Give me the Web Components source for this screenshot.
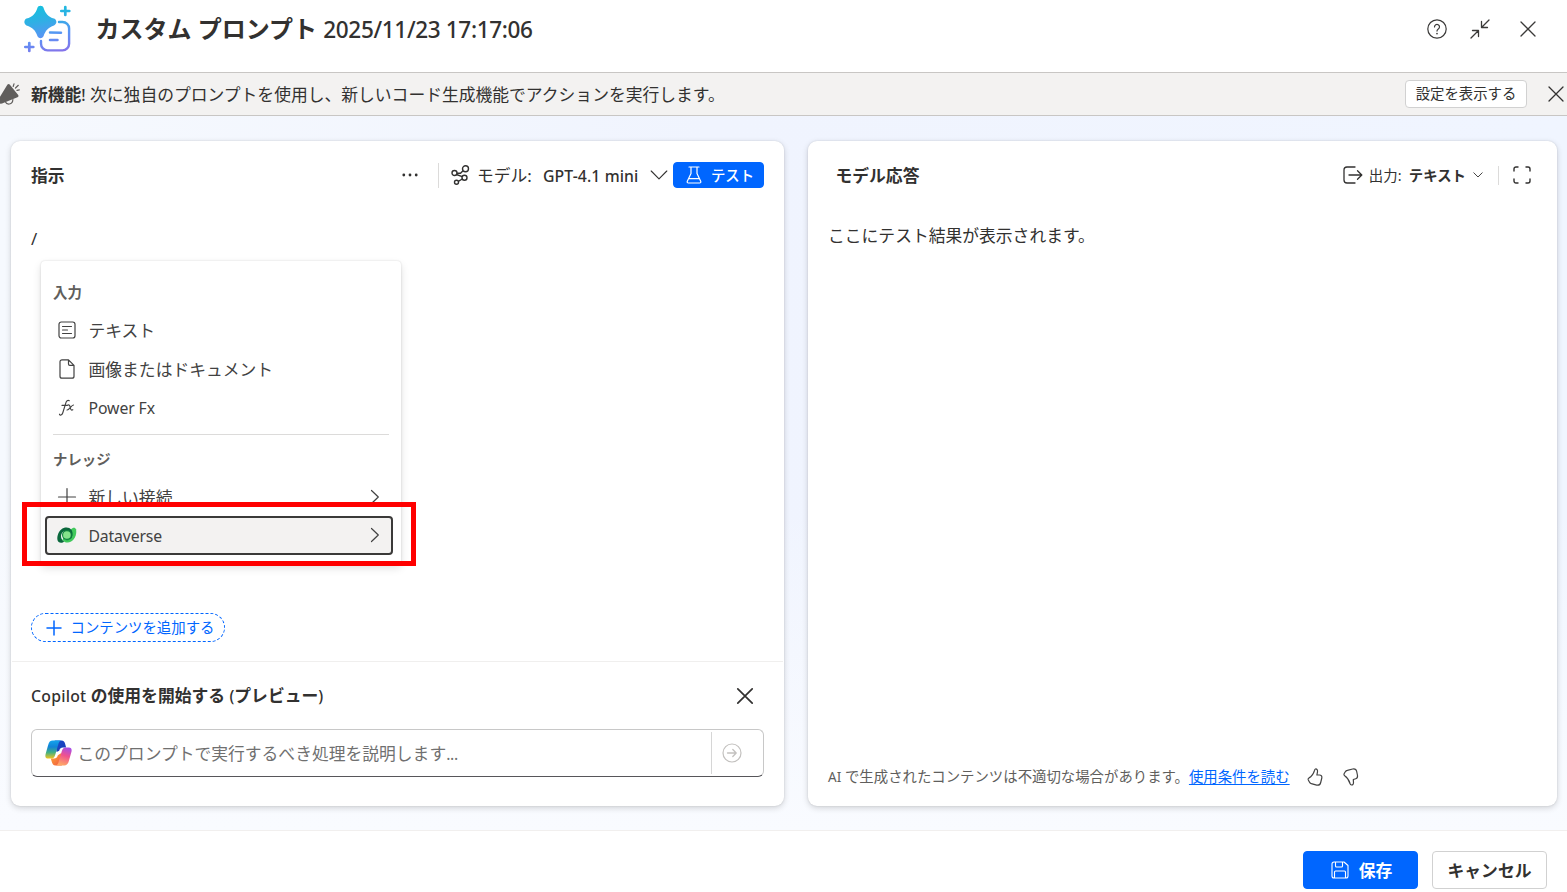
<!DOCTYPE html>
<html lang="ja">
<head>
<meta charset="utf-8">
<title>カスタム プロンプト</title>
<style>
    html, body { height: 100%; }
    body {
        margin: 0;
        overflow: hidden;
        color: #323130;
        font: 16.8px/24px "Noto Sans", "Noto Sans CJK JP", sans-serif;
    }
</style>
</head>
<body>
<prompt-app></prompt-app>

<script>
"use strict";
const line = (d, w = 1.2) => `<path d="${d}" fill="none" stroke="currentColor" stroke-width="${w}" stroke-linecap="round" stroke-linejoin="round"/>`;

// [width, height, markup]
const ICONS = {
    logo: [48, 48, `
        <defs><linearGradient id="g" gradientUnits="userSpaceOnUse" x1="20" y1="0" x2="30" y2="48">
            <stop offset="0" stop-color="#16c0de"/><stop offset=".3" stop-color="#2fb0e4"/><stop offset=".65" stop-color="#5b93f5"/><stop offset="1" stop-color="#8573ea"/>
        </linearGradient></defs>
        <path fill="url(#g)" d="M13.300 3.200C14.200 0 18.800 0 19.700 3.200C21.200 8.300 24.500 11.800 30 13.600C33.200 14.900 33.200 19.100 30 20.400C24.500 22.200 21.200 25.700 19.700 30.800C18.800 34 14.200 34 13.300 30.800C11.800 25.700 8.500 22.200 2.500 20.400C-.3 19.100-.3 14.900 2.500 13.600C8.500 11.800 11.800 8.300 13.300 3.200Z"/>
        <g fill="none" stroke="url(#g)" stroke-width="2.400" stroke-linecap="round">
            <path d="M35 17H38.500A6.600 6.600 0 0 1 45.100 23.600V38.800A6.600 6.600 0 0 1 38.500 45.400H23.600A6.600 6.600 0 0 1 17 38.800V36"/>
            <path d="M26 27.600L37 27.700M26 34.900L33.500 35" stroke-width="2.500"/>
            <path d="M41.300 2V10M37.300 6L45.300 6.010M5.300 38V46M1.300 42L9.300 42.010" stroke-width="2.700"/>
        </g>`],
    help: [20, 20, `<circle cx="10" cy="10" r="9.200" fill="none" stroke="currentColor" stroke-width="1.200"/>` +
        line('M7.500 7.900A2.500 2.500 0 1 1 11.300 10C10.300 10.700 10 11.100 10 12.100') + '<circle cx="10" cy="14.600" r=".85" fill="currentColor"/>'],
    shrink: [20, 20, line('M19 1L11.500 8.500M11.500 2.500V8.500H17.500M1 19L8.500 11.500M2.500 11.500H8.500V17.500', 1.300)],
    close: [16, 16, line('M1 1L15 15M15 1L1 15', 1.300)],
    closeBold: [16, 16, line('M.8 .8L15.200 15.200M15.200 .8L.8 15.200', 1.700)],
    megaphone: [20, 22, `
        <path fill="#605e5c" d="M7.500 1.600C8.200 .7 9.300 .8 9.900 1.700L18.200 12C18.800 13 18.400 13.800 17.500 14.200L2 20.600C1 21-.6 20.500-.6 19.500L-2 17Z"/>
        <path fill="none" stroke="#605e5c" stroke-width="1.200" stroke-linecap="round" d="M5.500 19C6.500 21.600 12.500 22.500 12.900 16.500M13.200 3.500L14 .800M15.500 5L18.300 2.300M17 7.300L19.300 6.900"/>`],
    more: [18, 4, '<g fill="currentColor"><circle cx="2.800" cy="2" r="1.400"/><circle cx="9" cy="2" r="1.400"/><circle cx="15.200" cy="2" r="1.400"/></g>'],
    model: [19, 20, `<g fill="none" stroke="currentColor" stroke-width="1.400">
        <circle cx="14.500" cy="3.800" r="3"/><circle cx="3.500" cy="8" r="2.500"/><circle cx="13.500" cy="12.800" r="2.500"/><circle cx="5.500" cy="17.300" r="2"/>
        <path d="M12 5.800L9.500 8.200L6 8.200M5.500 9.500L11.200 11.700M11.300 14L7.300 16.300"/></g>`],
    chevronDown: [18, 10, line('M1.200 1L9 8.800L16.800 1', 1.100)],
    chevronSmall: [10, 6, line('M.8 .8L5 5L9.200 .8', .9)],
    chevronRight: [10, 16, line('M1.500 1.500L8.300 8L1.500 14.500')],
    flask: [16, 18, line('M3 1H13M5 1V7.500L1.300 15.200C.9 16.200 1.400 17 2.400 17H13.600C14.600 17 15.100 16.200 14.700 15.200L11 7.500V1M3 12.600H13', 1.200)],
    output: [20, 18, line('M12 1H4A3 3 0 0 0 1 4V14A3 3 0 0 0 4 17H12M6 9H18.500M14.500 4.700L18.800 9L14.500 13.300', 1.300)],
    expand: [18, 18, line('M1 5V3A2 2 0 0 1 3 1H5M13 1H15A2 2 0 0 1 17 3V5M17 13V15A2 2 0 0 1 15 17H13M5 17H3A2 2 0 0 1 1 15V13', 1.400)],
    text: [18, 18, '<rect x="1" y="1" width="16" height="16" rx="2.300" fill="none" stroke="currentColor" stroke-width="1.200"/>' + line('M4.500 5.500H13.500M4.500 9H9.500M4.500 12.500H13.500', 1.100)],
    doc: [16, 20, line('M9.500 .8H3A2 2 0 0 0 1 2.800V17.200A2 2 0 0 0 3 19.200H13A2 2 0 0 0 15 17.200V6.300L9.500 .8V5A1.300 1.300 0 0 0 10.800 6.300H15')],
    fx: [18, 18, line('M1.500 15.200C2 16.700 4 16.300 4.800 13.800L7.700 4.300C8.300 2 9.700 .8 11.300 1.700M4 6.400H9.300M9.300 6.200C11.500 5.300 12 7 12.300 8.700C12.500 10.300 13.300 11.700 14.800 10.700M15.500 6C13.500 5.800 11.300 11.300 9 11', 1.150)],
    plus: [18, 18, line('M9 .5V17.500M.5 9H17.500', 1.200)],
    plusBlue: [16, 16, line('M8 1V15M1 8H15', 1.500)],
    save: [18, 18, line('M3 1H13L17 4.500V15A2 2 0 0 1 15 17H3A2 2 0 0 1 1 15V3A2 2 0 0 1 3 1ZM4.500 1V5A1 1 0 0 0 5.500 6H10.500A1 1 0 0 0 11.500 5V1M3.500 17V11A1 1 0 0 1 4.500 10H13.500A1 1 0 0 1 14.500 11V17', 1.100)],
    send: [20, 20, '<circle cx="10" cy="10" r="9" fill="none" stroke="currentColor" stroke-width="1.200"/>' + line('M5.500 10H14M10.800 6.500L14.200 10L10.800 13.500', 1.300)],
    thumbUp: [16, 18, line('M8.500 1C9.800 .8 10.800 2 10.500 3.800L9.900 7H12.500C14.300 7 15.200 8.300 14.800 10L13.700 14.500C13.200 16.500 11.700 17.500 9.700 17.100L4.300 15.700C3.300 15.400 2.800 14.900 2.400 14L1.200 11.800C.8 11 1.200 10.400 2 9.900C5 8.300 6.400 6 7.500 2.500C7.700 1.800 7.800 1.200 8.500 1Z')],
    thumbDown: [16, 18, line('M8.500 17C9.800 17.200 10.500 16 10.500 14.500L10.300 11.500L12.800 10.700C14.300 10.200 14.700 9 14.500 7.500L13.700 3.500C13.300 1.500 11.700 .7 9.700 1L4.300 2.300C3.300 2.500 2.800 2.900 2.300 3.700L1.100 5.700C.7 6.500 1 7.300 1.700 7.800C4.500 9.700 6 12 7 15.500C7.300 16.400 7.600 16.900 8.500 17Z')],
    // Microsoft Dataverse mark
    dataverse: [20, 16, `
        <path fill="#41c95c" d="M14 2.200C15.500 .4 18.300-.2 19 2.300C20.300 7.500 17 15.200 11 15.600C8.500 15.700 6 14.500 5.500 12.500Z"/>
        <path fill="#1fa64a" d="M14.300 2.500C17 6.500 15.300 12.500 11.500 13.300C8.500 14 6.500 12.500 5.800 10.500L9 13.500Z"/>
        <path fill="#0a683c" d="M5.800 15.400C.3 16.800-.4 12 .8 8C2.300 3 5.500 .4 9.600 .4C13.500 .4 16 3.500 15.400 8.500C15 10.500 14.200 11.700 13 12.300A5.200 5.200 0 0 0 5.300 5.500C3 8.700 4 12.800 7.200 14.500C6.800 15 6.400 15.300 5.800 15.400Z"/>
        <circle cx="9.900" cy="8" r="4.900" fill="#10823f"/>
        <circle cx="9.900" cy="8" r="3.800" fill="#84e28b"/>`],
    copilot: [27, 26, `
        <defs>
            <linearGradient id="a" x1=".4" y1="0" x2=".4" y2="1"><stop stop-color="#13a4ed"/><stop offset=".35" stop-color="#1182d6"/><stop offset=".66" stop-color="#43b082"/><stop offset="1" stop-color="#f4c51d"/></linearGradient>
            <linearGradient id="b" x1=".7" y1="0" x2=".4" y2="1"><stop stop-color="#a64de8"/><stop offset=".45" stop-color="#f0528f"/><stop offset="1" stop-color="#ffaa65"/></linearGradient>
            <linearGradient id="c" x1="0" y1="0" x2="1" y2="1"><stop stop-color="#1b4ecb"/><stop offset="1" stop-color="#1738b5"/></linearGradient>
            <linearGradient id="d" x1="0" y1="0" x2="1" y2="1"><stop stop-color="#ffae31"/><stop offset="1" stop-color="#f05545"/></linearGradient>
        </defs>
        <g transform="scale(.965 1)">
        <path fill="url(#c)" d="M10 .6H17C19.500 .6 20.300 2 20.900 4L21.900 7.500H18.500C16.500 7.500 15.400 8.500 14.700 10.700L12 12Z"/>
        <path fill="url(#d)" d="M17.500 25.400H11C8.500 25.400 7.700 24 7.100 22L6 18.500H9.500C11.500 18.500 12.600 17.500 13.300 15.300L17 13Z"/>
        <path fill="url(#a)" d="M8 .6H16.800C14.800 .9 14.300 2.800 13.600 5L10.700 14.500C9.700 17.700 8.600 18.600 5.700 18.600H3.300C.4 18.600-.1 16.500 .8 13.400L3.200 5.300C4.200 2 5.400 .6 8 .6Z"/>
        <path fill="url(#b)" d="M20 25.400H11.200C13.200 25.100 13.700 23.200 14.400 21L17.300 11.500C18.300 8.300 19.400 7.400 22.300 7.400H24.700C27.600 7.400 28.100 9.500 27.200 12.600L24.800 20.700C23.800 24 22.600 25.400 20 25.400Z"/>
        </g>`]
};

class UiIcon extends HTMLElement {
    constructor() {
        super();
        this.attachShadow({ mode: 'open' });
    }
    connectedCallback() {
        const [w, h, markup] = ICONS[this.getAttribute('name')];
        this.shadowRoot.innerHTML = `
            <style>
                :host { display: inline-flex; flex: none; justify-content: center; align-items: center; }
                svg { display: block; overflow: visible; }
            </style>
            <svg width="${w}" height="${h}" viewBox="0 0 ${w} ${h}">${markup}</svg>`;
    }
}
customElements.define('ui-icon', UiIcon);

// base for elements that only need a shadow tree built once
class BaseElement extends HTMLElement {
    constructor() {
        super();
        const template = document.createElement('template');
        template.innerHTML = this.constructor.html;
        this.attachShadow({ mode: 'open' }).appendChild(template.content.cloneNode(true));
    }
}

// latin runs sit a little smaller beside the kana; inline, so no whitespace around the slot
class LatinText extends BaseElement {
    static html = '<style>:host { font-size: .94em; white-space: nowrap; } :host([strong]) { font-weight: 500; }</style><slot></slot>';
}
customElements.define('latin-text', LatinText);

class UiButton extends BaseElement {
    static html = `
        <style>
            :host {
                display: flex; box-sizing: border-box; flex: none;
                align-items: center; justify-content: center;
                border: 1px solid #d1d1d1; border-radius: 4px;
                background: #fff; white-space: nowrap; cursor: pointer;
            }
            :host([primary]) { border-color: #0066ff; background: #0066ff; color: #fff; }
        </style>
        <slot></slot>`;
}
customElements.define('ui-button', UiButton);

class AppHeader extends BaseElement {
    static html = `
        <style>
            :host { display: flex; align-items: center; height: 72px; flex: none; box-sizing: border-box; padding: 0 31px 14px 24px; }
            ui-icon[name=logo] { margin-right: 23.500px; }
            h1 { margin: 0 auto 0 0; font-size: 24px; line-height: 32px; font-weight: 600; white-space: nowrap; }
            .actions { display: flex; align-items: center; color: #3b3a39; }
            ui-icon[name=shrink] { margin: 0 30px 0 23px; }
        </style>
        <ui-icon name="logo"></ui-icon>
        <h1><slot></slot></h1>
        <div class="actions">
            <ui-icon name="help"></ui-icon><ui-icon name="shrink"></ui-icon><ui-icon name="close"></ui-icon>
        </div>`;
}
customElements.define('app-header', AppHeader);

class MessageBar extends BaseElement {
    static html = `
        <style>
            :host {
                display: flex; align-items: center; flex: none; box-sizing: border-box;
                height: 44px; padding: 0 3px 0 0;
                border: solid #c8c6c4; border-width: 1px 0; background: #f3f2f1;
                white-space: nowrap;
            }
            ui-icon[name=megaphone] { margin-right: 11px; }
            .text { flex: 1; padding-top: 2px; }
            ui-button { width: 122px; height: 28px; margin-right: 21px; font-size: 14.4px; }
        </style>
        <ui-icon name="megaphone"></ui-icon>
        <div class="text"><slot></slot></div>
        <ui-button><slot name="action"></slot></ui-button>
        <ui-icon name="close"></ui-icon>`;
}
customElements.define('message-bar', MessageBar);

class PanelCard extends BaseElement {
    static html = `
        <style>
            :host {
                display: flex; flex-direction: column; position: relative; box-sizing: border-box;
                border-radius: 9px; background: #fff;
                box-shadow: 0 0 2px rgba(0,0,0,.12), 0 2px 6px rgba(0,0,0,.16);
            }
            header { display: flex; align-items: center; height: 68px; flex: none; padding: 0 20px; white-space: nowrap; }
            h2 { margin: 0 auto 0 var(--title-indent, 0px); padding-top: 2px; font-size: 16.8px; font-weight: 600; }
        </style>
        <header><h2><slot name="title"></slot></h2><slot name="tools"></slot></header>
        <slot></slot>`;
}
customElements.define('panel-card', PanelCard);

class MenuItem extends BaseElement {
    static html = `
        <style>
            :host {
                display: flex; align-items: center; height: 39px; box-sizing: border-box;
                margin: 0 8px 0 4px; padding: 0 13px 0 12px; color: #424242; white-space: nowrap;
            }
            :host([selected]) { border: 2px solid #3b3a39; border-radius: 4px; padding: 0 11px 0 10px; background: #f3f2f1; }
            .icon { display: flex; width: 20px; justify-content: center; margin-right: 11.500px; padding-bottom: 1px; }
            .label { flex: 1; }
            ::slotted([slot=end]) { padding-bottom: 1px; }
        </style>
        <span class="icon"><slot name="icon"></slot></span>
        <span class="label"><slot></slot></span>
        <slot name="end"></slot>`;
}
customElements.define('menu-item', MenuItem);

class InsertMenu extends BaseElement {
    static html = `
        <style>
            :host {
                display: block; box-sizing: border-box; width: 360px; height: 303px; padding-top: 14px;
                border-radius: 4px; background: #fff;
                box-shadow: 0 0 2px rgba(0,0,0,.16), 0 4px 9px rgba(0,0,0,.13);
            }
            h3 { margin: 0; padding-left: 12px; height: 36px; line-height: 36px; font-size: 14.4px; font-weight: 600; color: #605e5c; }
            hr { margin: 6px 12px; border: 0; height: 1px; background: #dcdbda; }
            .second { line-height: 38px; }
            .fx { padding-bottom: 1px; }
            .new { padding-top: 2px; }
        </style>
        <h3>入力</h3>
        <menu-item><ui-icon slot="icon" name="text"></ui-icon>テキスト</menu-item>
        <menu-item><ui-icon slot="icon" name="doc"></ui-icon>画像またはドキュメント</menu-item>
        <menu-item class="fx"><ui-icon slot="icon" name="fx"></ui-icon><latin-text style="letter-spacing:-.1px">Power Fx</latin-text></menu-item>
        <hr>
        <h3 class="second">ナレッジ</h3>
        <menu-item class="new"><ui-icon slot="icon" name="plus"></ui-icon>新しい接続<ui-icon slot="end" name="chevronRight"></ui-icon></menu-item>
        <menu-item selected><ui-icon slot="icon" name="dataverse"></ui-icon><latin-text style="letter-spacing:-.15px">Dataverse</latin-text><ui-icon slot="end" name="chevronRight"></ui-icon></menu-item>`;
}
customElements.define('insert-menu', InsertMenu);

class PromptEditor extends BaseElement {
    static html = `
        <style>
            :host { display: flex; flex-direction: column; flex: 1; padding: 18px 20px 19px; align-items: flex-start; }
            .value { flex: 1; }
            .add {
                display: flex; align-items: center; box-sizing: border-box; width: 194px; height: 29px;
                padding-left: 14px; gap: 8.500px;
                border: 1px dashed #0066ff; border-radius: 15px;
                color: #0066ff; font-size: 14.4px; white-space: nowrap;
            }
        </style>
        <div class="value"><slot></slot></div>
        <div class="add"><ui-icon name="plusBlue"></ui-icon>コンテンツを追加する</div>`;
}
customElements.define('prompt-editor', PromptEditor);

class CopilotBox extends BaseElement {
    static html = `
        <style>
            :host { display: block; box-sizing: border-box; height: 145px; padding: 22px 20px 0; border-top: 1px solid #f0efee; margin: 0 1px; }
            .head { display: flex; justify-content: space-between; align-items: center; height: 24px; padding-right: 10px; margin: 0 0 21px -1px; font-weight: 600; white-space: nowrap; }
            .head ui-icon { padding-bottom: 1px; }
            .input {
                display: flex; align-items: center; box-sizing: border-box; height: 48px; margin: 0 -1px; padding-left: 13px;
                border: 1px solid #c8c8c8; border-bottom-color: #57565a; border-radius: 6px;
                color: #707070;
            }
            .input span { flex: 1; margin-left: 5.500px; padding-top: 2px; white-space: nowrap; }
            .send { display: flex; align-items: center; box-sizing: border-box; width: 52px; height: 42px; padding-left: 10px; border-left: 1px solid #d6d6d6; color: #c3c1bf; }
        </style>
        <div class="head"><div><latin-text strong style="letter-spacing:.25px">Copilot</latin-text> の使用を開始する <latin-text strong>(</latin-text>プレビュー<latin-text strong>)</latin-text></div><ui-icon name="closeBold"></ui-icon></div>
        <div class="input">
            <ui-icon name="copilot"></ui-icon>
            <span>このプロンプトで実行するべき処理を説明します<latin-text style="letter-spacing:-.3px">...</latin-text></span>
            <div class="send"><ui-icon name="send"></ui-icon></div>
        </div>`;
}
customElements.define('copilot-box', CopilotBox);

class ModelResponse extends BaseElement {
    static html = `
        <style>
            :host { display: flex; flex-direction: column; justify-content: space-between; flex: 1; padding: 15px 20px 17px; }
            .notice { display: flex; align-items: center; font-size: 14.4px; color: #605e5c; white-space: nowrap; }
            a { color: #0066ff; text-decoration: underline; text-underline-offset: 2px; }
            .up { margin: 0 20px 0 17px; }
            .up, .down { color: #424242; }
        </style>
        <div><slot></slot></div>
        <div class="notice">
            <div><latin-text>AI</latin-text> で生成されたコンテンツは不適切な場合があります。</div><a>使用条件を読む</a>
            <ui-icon class="up" name="thumbUp"></ui-icon><ui-icon class="down" name="thumbDown"></ui-icon>
        </div>`;
}
customElements.define('model-response', ModelResponse);

class PromptApp extends BaseElement {
    static html = `
        <style>
            :host { display: flex; flex-direction: column; position: relative; height: 892px; background: #fff; }
            main {
                flex: 1; display: grid; grid-template-columns: 773px 749px; gap: 24px; box-sizing: border-box;
                padding: 25px 10px 24px 11px;
                background: linear-gradient(to bottom, rgba(249,251,255,0) 55%, #f9fbff 100%), linear-gradient(to right, #f6f9fe, #f0f4fe 45%, #f0f5ff);
            }
            .response { --title-indent: 7.500px; }
            .tools { display: flex; align-items: center; }
            .rule { width: 1px; background: #dcdbda; }
            .model { width: 66px; margin-left: 7px; padding-top: 2px; }
            .gpt { width: 107px; padding-top: 2px; }
            .test { width: 91px; height: 26px; margin-left: 5px; gap: 9px; padding-left: 3px; font-size: 14.4px; font-weight: 500; }
            .test span, .save span { padding-top: 2px; }
            .out { font-size: 14.4px; width: 40px; margin-left: 6px; padding-top: 1px; }
            .kind { font-size: 14.4px; font-weight: 600; margin-right: 7px; padding-top: 1px; }
            footer {
                display: flex; justify-content: flex-end; gap: 14px; height: 62px; box-sizing: border-box; flex: none;
                padding: 20px 20px 0 0; border-top: 1px solid #f1efee; font-weight: 600;
            }
            footer ui-button { width: 115px; height: 38px; }
            .save { gap: 10px; padding-left: 2px; }
            .cancel { padding-top: 2px; }
            insert-menu { position: absolute; left: 41px; top: 261px; }
            .highlight { position: absolute; left: 22px; top: 502px; width: 394px; height: 64px; box-sizing: border-box; border: 5px solid #ff0000; }
        </style>
        <app-header>カスタム プロンプト <latin-text strong style="letter-spacing:-.35px">2025/11/23 17:17:06</latin-text></app-header>
        <message-bar><b>新機能</b><latin-text strong>!</latin-text> 次に独自のプロンプトを使用し、新しいコード生成機能でアクションを実行します。<span slot="action">設定を表示する</span></message-bar>
        <main>
            <panel-card>
                <span slot="title">指示</span>
                <div slot="tools" class="tools">
                    <ui-icon name="more"></ui-icon>
                    <div class="rule" style="height:25px;margin:0 12px 0 19px"></div>
                    <ui-icon name="model"></ui-icon>
                    <span class="model">モデル:</span>
                    <div class="gpt"><latin-text strong style="letter-spacing:.1px">GPT-4.1 mini</latin-text></div>
                    <ui-icon name="chevronDown"></ui-icon>
                    <ui-button primary class="test"><ui-icon name="flask"></ui-icon><span>テスト</span></ui-button>
                </div>
                <prompt-editor>/</prompt-editor>
                <copilot-box></copilot-box>
            </panel-card>
            <panel-card class="response">
                <span slot="title">モデル応答</span>
                <div slot="tools" class="tools">
                    <ui-icon name="output"></ui-icon>
                    <span class="out">出力:</span>
                    <span class="kind">テキスト</span>
                    <ui-icon name="chevronSmall"></ui-icon>
                    <div class="rule" style="height:19px;margin:0 14px 0 15px"></div>
                    <ui-icon name="expand" style="margin-right:6px"></ui-icon>
                </div>
                <model-response>ここにテスト結果が表示されます。</model-response>
            </panel-card>
        </main>
        <footer>
            <ui-button primary class="save"><ui-icon name="save"></ui-icon><span>保存</span></ui-button>
            <ui-button><span class="cancel">キャンセル</span></ui-button>
        </footer>
        <insert-menu></insert-menu>
        <div class="highlight"></div>`;
}
customElements.define('prompt-app', PromptApp);
</script>
</body>
</html>
